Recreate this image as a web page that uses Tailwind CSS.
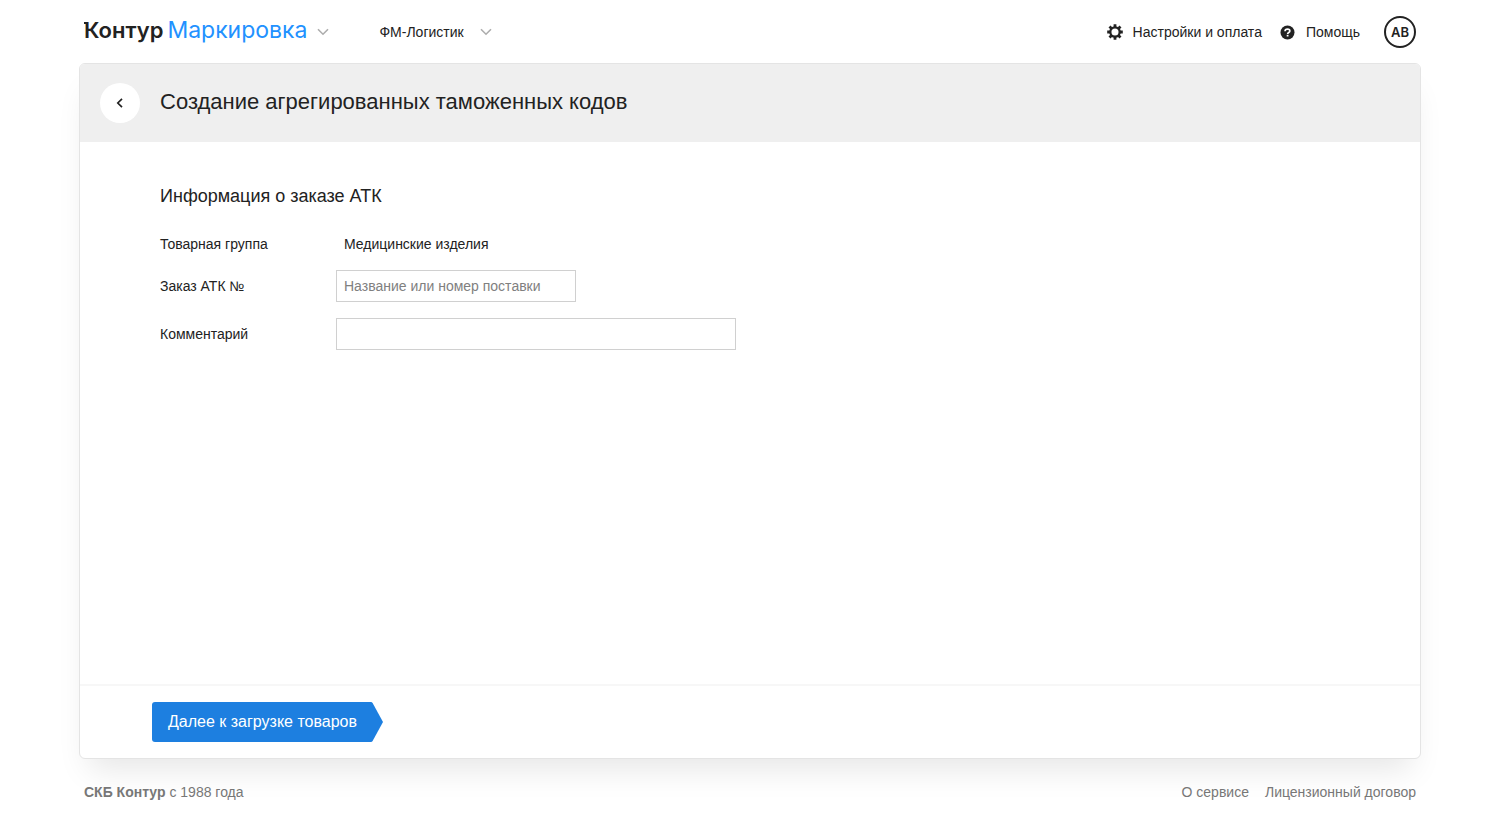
<!DOCTYPE html>
<html lang="ru">
<head>
<meta charset="utf-8">
<meta name="viewport" content="width=device-width, initial-scale=1">
<title>Контур Маркировка</title>
<script src="https://cdn.jsdelivr.net/npm/@tailwindcss/browser@4"></script>
</head>
<body class="flex min-h-screen flex-col bg-white px-[79px] font-['Liberation_Sans',sans-serif] text-sm leading-5 text-[#222]">
  <header class="flex h-[63px] shrink-0 items-center justify-between px-[5px] pt-px">
    <div class="flex items-center">
      <button type="button" class="flex items-center gap-[10px]">
        <span class="relative flex items-baseline gap-1 pb-1 font-['Inter',sans-serif] text-[23px] leading-8"><span class="absolute top-2 left-0 h-[2px] w-1 bg-[#222]"></span><b class="text-[22px] font-semibold">Контур</b><span class="text-[#2291ff]">Маркировка</span></span>
        <svg class="h-2 w-3" viewBox="0 0 12 8" fill="none" stroke="#adadad" stroke-width="1.6" aria-hidden="true"><path d="M1 1.200 6 6.200 11 1.200"/></svg>
      </button>
      <button type="button" class="ml-[50px] flex items-center gap-4">
        <span>ФМ-Логистик</span>
        <svg class="h-2 w-3" viewBox="0 0 12 8" fill="none" stroke="#adadad" stroke-width="1.6" aria-hidden="true"><path d="M1 1.200 6 6.200 11 1.200"/></svg>
      </button>
    </div>
    <nav class="flex items-center">
      <a href="#" class="flex items-center gap-[10px]">
        <svg class="size-4" viewBox="0 0 16 16" aria-hidden="true">
          <g stroke="#222" stroke-width="2.800"><path d="M8 .2V3M8 13v2.800M.2 8H3M13 8h2.800M2.500 2.500l2 2M11.500 11.500l2 2M13.500 2.500l-2 2M4.500 11.500l-2 2"/></g>
          <circle cx="8" cy="8" r="4.700" fill="none" stroke="#222" stroke-width="2.300"/>
        </svg>
        <span>Настройки и оплата</span>
      </a>
      <a href="#" class="ml-[18px] flex items-center gap-[10px]">
        <svg class="size-4" viewBox="0 0 16 16" aria-hidden="true">
          <circle cx="7.500" cy="8.500" r="7" fill="#222"/>
          <path d="M5 7.300c0-1.400 1.100-2.200 2.500-2.200s2.400.8 2.400 1.900c0 1.500-2.300 1.400-2.300 2.900" fill="none" stroke="#fff" stroke-width="1.600"/><rect x="6.700" y="10.800" width="1.800" height="1.700" fill="#fff"/>
        </svg>
        <span>Помощь</span>
      </a>
      <button type="button" class="ml-6 flex size-8 items-center justify-center rounded-full border-2 border-[#222] font-['Inter',sans-serif] text-[13px] font-semibold">АВ</button>
    </nav>
  </header>

  <main class="flex flex-1 flex-col overflow-hidden rounded-md border border-[#e4e4e4] bg-white shadow-[0_20px_30px_-10px_rgba(0,0,0,0.1)]">
    <div class="flex h-[78px] items-center gap-5 bg-[#efefef] px-5">
      <button type="button" aria-label="Назад" class="flex size-10 items-center justify-center rounded-full bg-white">
        <svg class="h-3 w-2" viewBox="0 0 8 12" fill="none" stroke="#222" stroke-width="1.700" aria-hidden="true"><path d="M6 1.800 1.800 6 6 10.200"/></svg>
      </button>
      <h1 class="pb-[2px] text-[22px] leading-7">Создание агрегированных таможенных кодов</h1>
    </div>
    <form id="order" class="flex-1 px-20 pt-10">
      <h2 class="text-lg leading-7">Информация о заказе АТК</h2>
      <div class="mt-6 grid grid-cols-[176px_1fr] items-center gap-y-4">
        <span>Товарная группа</span><span class="px-2">Медицинские изделия</span>
        <label for="num">Заказ АТК №</label>
        <input id="num" type="text" placeholder="Название или номер поставки" class="h-8 w-60 border border-[#d0d0d0] px-[7px] placeholder:text-[#808080]">
        <label for="comment">Комментарий</label>
        <input id="comment" type="text" class="h-8 w-[400px] border border-[#d0d0d0] px-[7px]">
      </div>
    </form>
    <div class="border-t-2 border-[#f7f7f7] px-[72px] py-4">
      <button type="submit" form="order" class="flex h-10 items-stretch text-base text-white">
        <span class="flex items-center rounded-l-[3px] bg-[#1d7fe0] pr-[14px] pl-4">Далее к загрузке товаров</span>
        <svg class="h-10 w-3" viewBox="0 0 12 40" fill="#1d7fe0" aria-hidden="true"><path d="M0 0Q1 0 1.600 1L12 20 1.600 39Q1 40 0 40z"/></svg>
      </button>
    </div>
  </main>

  <footer class="flex h-[67px] shrink-0 items-center justify-between px-[5px] pb-[2px] text-[#777]">
    <p><b>СКБ Контур</b> с 1988 года</p>
    <nav class="flex gap-4"><a href="#">О сервисе</a><a href="#">Лицензионный договор</a></nav>
  </footer>
</body>
</html>
